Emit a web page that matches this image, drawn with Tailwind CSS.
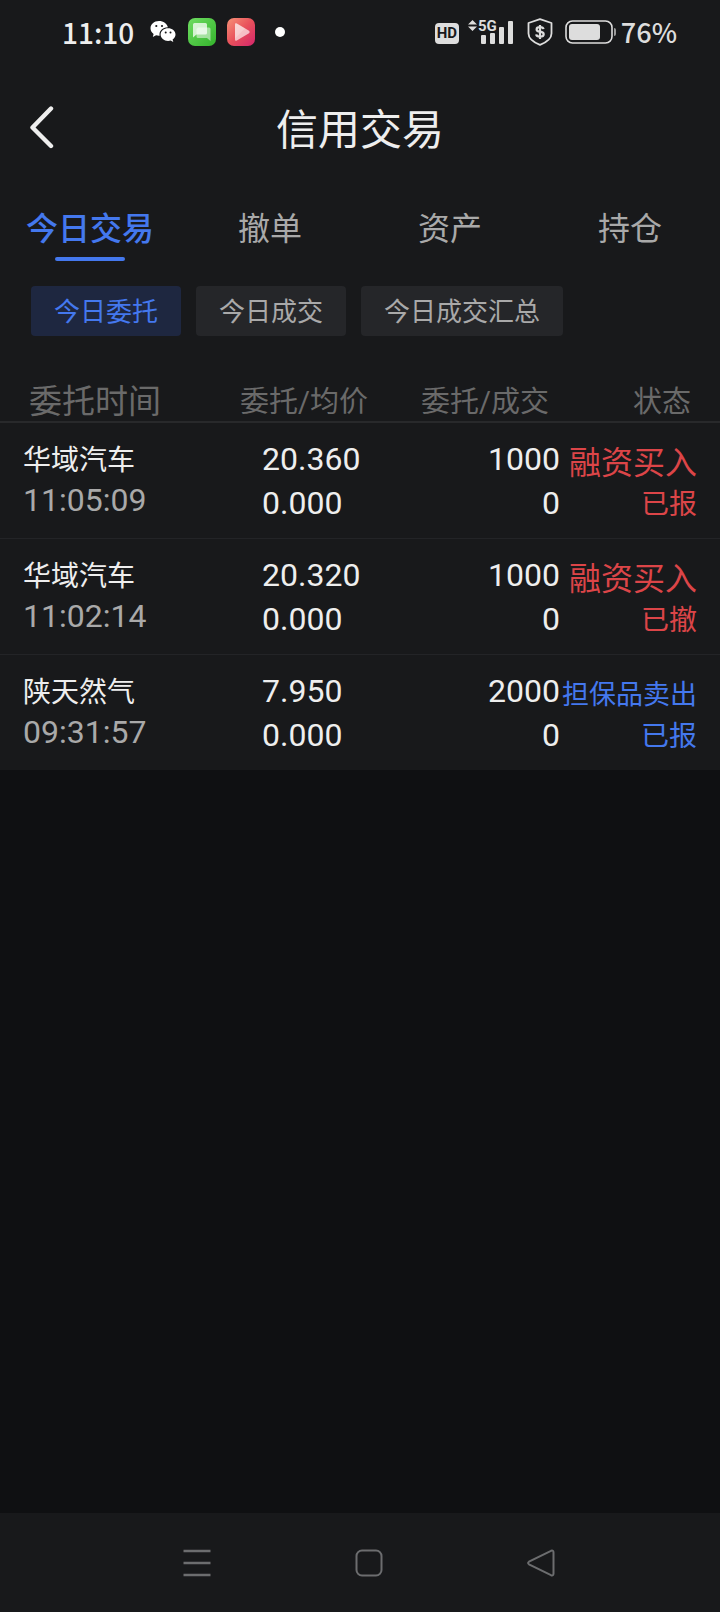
<!DOCTYPE html>
<html lang="zh-CN">
  <head>
    <meta charset="UTF-8" />
    <meta name="viewport" content="width=device-width, initial-scale=1.0" />
    <title>信用交易</title>
    <script src="https://cdn.jsdelivr.net/npm/@tailwindcss/browser@4"></script>
  </head>
  <body
    class="bg-[#0f1012] text-[#eeeeee] font-['Roboto','Noto_Sans_CJK_SC',sans-serif] min-h-screen flex flex-col"
  >
    <div class="bg-[#18191b]">
      <!-- status bar -->
      <div class="h-16 flex items-center justify-between pl-[62px] pr-[43px]">
        <div class="flex items-center">
          <span class="text-[28px] leading-8 font-medium font-['Noto_Sans_CJK_SC',sans-serif] w-[72px] mr-4">11:10</span>
          <svg class="w-[26px] h-[22px] mr-[12px]" viewBox="0 0 26 22" fill="#fff">
            <path d="M9 0C4 0 .5 3.300 .5 7.300c0 2.400 1.200 4.400 3.100 5.700L2.800 16l3.300-1.700c.9.300 1.900.4 2.900.4h.6C8.800 9.900 12.700 6.300 17.600 6.300h.3C17.100 2.700 13.400 0 9 0z" />
            <path d="M25.500 13.600c0-3.600-3.400-6.300-7.400-6.300s-7.500 2.700-7.500 6.300 3.400 6.400 7.500 6.400c.9 0 1.700-.1 2.500-.4l2.700 1.500-.7-2.500c1.800-1.200 2.900-3 2.900-5z" />
            <g fill="#18191b">
              <circle cx="6.300" cy="5" r="1.100" />
              <circle cx="12" cy="5" r="1.100" />
              <circle cx="15.700" cy="11.500" r="1" />
              <circle cx="20.500" cy="11.500" r="1" />
            </g>
          </svg>
          <svg class="w-[28px] h-[28px] mr-[11px]" viewBox="0 0 28 28">
            <defs>
              <linearGradient id="green" x1="0" y1="0" x2="1" y2="1">
                <stop offset="0" stop-color="#6fdc62" />
                <stop offset="1" stop-color="#34b42c" />
              </linearGradient>
            </defs>
            <rect width="28" height="28" rx="7" fill="url(#green)" />
            <path d="M10 9.500h11a1.500 1.500 0 0 1 1.500 1.500v12l-3.500-3h-9a1.500 1.500 0 0 1-1.500-1.500V11z" fill="#fff" fill-opacity=".5" />
            <path d="M6.500 5h11A1.500 1.500 0 0 1 19 6.500V15a1.500 1.500 0 0 1-1.500 1.500H8.500L5 19.500v-13A1.500 1.500 0 0 1 6.500 5z" fill="#fff" fill-opacity=".75" />
          </svg>
          <svg class="w-[28px] h-[28px] mr-5" viewBox="0 0 28 28">
            <defs>
              <linearGradient id="red" x1="0" y1="0" x2="1" y2="1">
                <stop offset="0" stop-color="#f79277" />
                <stop offset=".5" stop-color="#e8505b" />
                <stop offset="1" stop-color="#d4256c" />
              </linearGradient>
            </defs>
            <rect width="28" height="28" rx="7" fill="url(#red)" />
            <path d="M8 6.500q0-2 1.800-1L22 12.700q1.500 1.300 0 2.600L9.800 22.500Q8 23.500 8 21.500z" fill="#fff" fill-opacity=".65" />
            <path d="M8 6.500v14L18 10.300 9.800 5.500Q8 4.500 8 6.500z" fill="#fff" fill-opacity=".2" />
          </svg>
          <span class="w-[10px] h-[10px] rounded-full bg-white"></span>
        </div>

        <div class="flex items-center text-[#dddddd]">
          <span
            class="w-6 h-[21px] mt-[2px] mr-[9px] rounded-[4px] bg-[#dddddd] text-[#18191b] text-[15px] leading-[21px] font-bold text-center"
            >HD</span
          >
          <svg class="w-[46px] h-[30px] mb-1 mr-[13px]" viewBox="0 -4 46 30" fill="#dddddd">
            <path d="M0 5.500L4.500 1 9 5.500zM0 7.500h9L4.500 12z" />
            <text x="10" y="12" font-size="15" font-weight="700" font-family="Roboto">5G</text>
            <rect x="13" y="16" width="5" height="9" rx="1" />
            <rect x="22" y="14" width="5" height="11" rx="1" />
            <rect x="31" y="8" width="5" height="17" rx="1" />
            <rect x="40" y="2" width="5" height="23" rx="1" />
          </svg>
          <svg class="w-[26px] h-[28px] mr-[12px]" viewBox="0 0 26 28">
            <path
              d="M13 1.200L24.500 5v10.500c0 5.500-5.500 9-11.500 11.300C7 24.500 1.500 21 1.500 15.500V5z"
              fill="none" stroke="#dddddd" stroke-width="1.800" stroke-linejoin="round"
            />
            <path
              d="M16.500 11.200c-.2-1.300-1.500-2-3.500-2s-3.400.8-3.400 2.200c0 1.500 1.300 2 3.400 2.300 2.200.4 3.700.9 3.700 2.500s-1.500 2.400-3.700 2.400-3.600-.8-3.800-2.300M13 7v14"
              fill="none" stroke="#dddddd" stroke-width="2.200"
            />
          </svg>
          <svg class="w-[51px] h-[24px] mr-[5px]" viewBox="0 0 51 24">
            <rect x="1" y="1" width="46" height="22" rx="6.500" fill="none" stroke="#dddddd" stroke-width="1.600" />
            <rect x="4" y="4" width="31" height="16" rx="3" fill="#dddddd" />
            <path d="M49 8q2 0 2 2v4q0 2-2 2z" fill="#9a9a9a" />
          </svg>
          <span class="text-[27px] leading-8 font-medium font-['Noto_Sans_CJK_SC',sans-serif]">76%</span>
        </div>
      </div>

      <header class="h-32 grid grid-cols-[1fr_auto_1fr] items-center px-7">
        <button aria-label="返回">
          <svg class="w-7 h-[44px]" viewBox="0 0 28 44">
            <path d="M23 2.500L4.500 21.500 23 40" fill="none" stroke="#eeeeee" stroke-width="4.400" stroke-linecap="round" stroke-linejoin="round" />
          </svg>
        </button>
        <h1 class="text-[42px] leading-[60px] pt-[6px]">信用交易</h1>
      </header>

      <nav class="grid grid-cols-4 text-center text-[32px] leading-[48px] text-[#a9a9a9] pt-[13px]">
        <a href="#" class="flex flex-col items-center gap-1 text-[#4478ee] font-medium">
          今日交易
          <span class="w-[70px] h-1 rounded-full bg-[#4478ee]"></span>
        </a>
        <a href="#">撤单</a>
        <a href="#">资产</a>
        <a href="#">持仓</a>
      </nav>

      <div class="flex gap-[15px] pt-[25px] pl-[31px] text-[26px] leading-[48px] text-[#a9a9a9]">
        <button class="pt-[2px] px-[23px] rounded-[4px] bg-[#1e2740] text-[#4478ee]">今日委托</button>
        <button class="pt-[2px] px-[23px] rounded-[4px] bg-[#252629]">今日成交</button>
        <button class="pt-[2px] px-[23px] rounded-[4px] bg-[#252629]">今日成交汇总</button>
      </div>

      <table class="w-full table-fixed whitespace-nowrap text-[32px] leading-[44px]">
        <thead>
          <tr class="border-b-2 border-[#28292b] text-[29px] leading-[38px] text-[#6a6a6a]">
            <th class="w-1/3 pt-[47px] pl-[29px] text-left text-[33px] font-normal">委托时间</th>
            <th class="w-2/9 pt-[47px] text-left font-normal">委托/均价</th>
            <th class="w-2/9 pt-[47px] pr-[11px] text-right font-normal">委托/成交</th>
            <th class="w-2/9 pt-[47px] pr-[29px] text-right font-normal">状态</th>
          </tr>
        </thead>
        <tbody class="align-top">
          <tr class="h-[116px] border-b border-[#232427]">
            <td class="pt-[19px] pl-[23px]">
              <div class="text-[28px] leading-[38px]">华域汽车</div>
              <div class="leading-10 text-[#a9a9a9]">11:05:09</div>
            </td>
            <td class="pt-[14px] pl-[22px]">20.360<br />0.000</td>
            <td class="pt-[14px] text-right">1000<br />0</td>
            <td class="pt-[19px] pr-[23px] text-right leading-[42px] text-[#dc4548]">
              <div>融资买入</div>
              <div class="text-[28px]">已报</div>
            </td>
          </tr>
          <tr class="h-[116px] border-b border-[#232427]">
            <td class="pt-[19px] pl-[23px]">
              <div class="text-[28px] leading-[38px]">华域汽车</div>
              <div class="leading-10 text-[#a9a9a9]">11:02:14</div>
            </td>
            <td class="pt-[14px] pl-[22px]">20.320<br />0.000</td>
            <td class="pt-[14px] text-right">1000<br />0</td>
            <td class="pt-[19px] pr-[23px] text-right leading-[42px] text-[#dc4548]">
              <div>融资买入</div>
              <div class="text-[28px]">已撤</div>
            </td>
          </tr>
          <tr class="h-[116px]">
            <td class="pt-[19px] pl-[23px]">
              <div class="text-[28px] leading-[38px]">陕天然气</div>
              <div class="leading-10 text-[#a9a9a9]">09:31:57</div>
            </td>
            <td class="pt-[14px] pl-[22px]">7.950<br />0.000</td>
            <td class="pt-[14px] text-right">2000<br />0</td>
            <td class="pt-[19px] pr-[23px] text-right leading-[42px] text-[#4478ee]">
              <div class="text-[27px]">担保品卖出</div>
              <div class="text-[28px]">已报</div>
            </td>
          </tr>
        </tbody>
      </table>
    </div>

    <!-- system navigation -->
    <div class="mt-auto h-[99px] bg-[#18191b] flex items-center justify-center gap-36 pl-[18px]">
      <button aria-label="菜单">
        <svg class="w-7 h-7" viewBox="0 0 28 28" stroke="#6c6d6f" stroke-width="2.400">
          <path d="M.5 2h27M.5 14h27M.5 26h27" />
        </svg>
      </button>
      <button aria-label="主页">
        <svg class="w-7 h-7" viewBox="0 0 28 28" fill="none" stroke="#6c6d6f" stroke-width="2">
          <rect x="1.500" y="1.500" width="25" height="25" rx="5.500" />
        </svg>
      </button>
      <button aria-label="返回上一级">
        <svg class="w-7 h-7" viewBox="0 0 28 28" fill="none" stroke="#6c6d6f" stroke-width="2">
          <path d="M24 1.800q2.500-1 2.500 1.700v21q0 2.700-2.500 1.700L2 15.300Q.2 14 2 12.700z" />
        </svg>
      </button>
    </div>
  </body>
</html>
